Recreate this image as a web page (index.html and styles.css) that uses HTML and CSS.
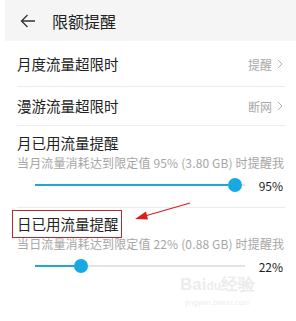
FILE: index.html
```html
<!DOCTYPE html>
<html lang="zh">
<head>
<meta charset="utf-8">
<link rel="stylesheet" href="styles.css">
</head>
<body>
<div class="page">
  <header class="bar">
    <svg class="back" width="16" height="14" viewBox="0 0 16 14"><path d="M15 7H1.5M7.5 1L1.5 7l6 6" fill="none" stroke="#333" stroke-width="1.3"/></svg>
    <span class="title">限额提醒</span>
  </header>
  <div class="list">
    <div class="row row1">
      <span class="label">月度流量超限时</span>
      <span class="value">提醒<svg class="chev" width="6" height="10" viewBox="0 0 6 10"><path d="M1 1l4 4-4 4" fill="none" stroke="#b0b0b0" stroke-width="1"/></svg></span>
    </div>
    <div class="row row2">
      <span class="label">漫游流量超限时</span>
      <span class="value">断网<svg class="chev" width="6" height="10" viewBox="0 0 6 10"><path d="M1 1l4 4-4 4" fill="none" stroke="#b0b0b0" stroke-width="1"/></svg></span>
    </div>
    <div class="block block1">
      <div class="label">月已用流量提醒</div>
      <div class="sub">当月流量消耗达到限定值 95% (3.80 GB) 时提醒我</div>
      <div class="slider">
        <div class="track"><div class="fill" style="width:95%"></div><div class="thumb" style="left:95%"></div></div>
        <span class="pct">95%</span>
      </div>
    </div>
    <div class="block block2">
      <div class="label boxed">日已用流量提醒</div>
      <div class="sub">当日流量消耗达到限定值 22% (0.88 GB) 时提醒我</div>
      <div class="slider">
        <div class="track"><div class="fill" style="width:22%"></div><div class="thumb" style="left:22%"></div></div>
        <span class="pct">22%</span>
      </div>
      <div class="mark">
        <div class="mark-big">Bai<span class="du">du</span>经验</div>
        <div class="mark-small">jingyan.baidu.com</div>
      </div>
    </div>
  </div>
  <svg class="arrow" width="60" height="22" viewBox="0 0 60 22"><path d="M57 1L12 14" stroke="#d81e1e" stroke-width="1.3"/><path d="M2 17L13 9.5L15 17.5Z" fill="#d81e1e"/></svg>
</div>
</body>
</html>
```
FILE: styles.css
```css
html, body { margin: 0; padding: 0; background: #fff; }
body { font-family: "Noto Sans CJK SC", "Noto Sans", sans-serif; color: #222; }
.page { position: relative; width: 296px; height: 321px; overflow: hidden; }
.bar { margin-left: 5px; height: 41px; background: #f5f5f5; display: flex; align-items: center; }
.back { margin-left: 15px; margin-top: 1px; }
.title { margin-left: 16px; font-size: 16px; color: #222; line-height: 1; }
.list { padding: 0 11px 0 17px; }
.row { display: flex; align-items: center; justify-content: space-between; border-bottom: 1px solid #ececec; }
.row1 { height: 44px; padding-top: 1px; }
.row2 { height: 38px; padding-top: 0; }
.label { font-size: 14.5px; line-height: 1; color: #222; }
.value { display: flex; align-items: center; gap: 5px; font-size: 12px; color: #a8a8a8; margin-right: 2px; }
.block { padding-top: 10px; }
.block1 { border-bottom: 1px solid #ececec; height: 71px; }
.block2 { position: relative; padding-top: 9px; }
.block .label { height: 15px; }
.sub { margin-top: 5px; font-size: 12px; line-height: 14px; color: #a6a6a6; white-space: nowrap; letter-spacing: 0.15px; }
.slider { display: flex; align-items: center; margin-top: 8px; height: 14px; }
.track { position: relative; margin-left: 18px; width: 210px; height: 2px; background: #e4e4e4; }
.fill { position: absolute; left: 0; top: 0; height: 2px; background: #23a6d6; }
.thumb { position: absolute; top: -6px; width: 14px; height: 14px; margin-left: -7px; border-radius: 50%; background: #17a9e1; }
.pct { margin-left: auto; font-size: 12px; color: #222; margin-right: 2px; }
.boxed { position: relative; }
.boxed::before { content: ""; position: absolute; left: -5px; top: -7px; width: 108px; height: 26px; border: 1px solid #b52b2b; }
.arrow { position: absolute; left: 133px; top: 202px; }
.mark { position: absolute; left: 163px; top: 68px; color: rgba(200,200,200,0.35); text-align: center; }
.mark-big { font-family: "Liberation Sans", sans-serif; font-size: 17px; font-weight: bold; line-height: 1; }
.du { font-size: 12px; }
.mark-small { font-family: "Liberation Sans", sans-serif; font-size: 8px; margin-top: 5px; }
```
